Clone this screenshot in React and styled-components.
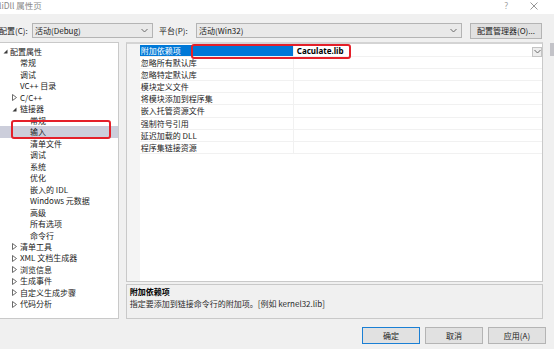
import styled, { createGlobalStyle } from "styled-components";

const GlobalStyle = createGlobalStyle`
    html, body { margin: 0; padding: 0; }
    body {
        background: #f0f0f0;
        font-family: "Noto Sans CJK SC", "Noto Sans", sans-serif;
        color: #1b1b1b;
        overflow: hidden;
    }
`

const Dialog = styled.div`
    position: relative;
    width: 554px;
    height: 349px;
    overflow: hidden;
    background: #f0f0f0;
    display: flex;
    flex-direction: column;
    font-size: 8px;
`

const TitleBar = styled.div`
    height: 14px;
    background: #ffffff;
    display: flex;
    align-items: flex-start;
    justify-content: space-between;
    color: #8a8a8a;
    font-size: 8.5px;
    line-height: 11px;
`

const TitleText = styled.span`
    margin-left: -1px;
`

const TitleIcons = styled.div`
    display: flex;
    align-items: center;
    gap: 22px;
    height: 11px;
    margin-right: 16px;
    color: #9a9a9a;
    font-family: "Noto Sans", "Liberation Sans", sans-serif;
    font-size: 8px;
    line-height: 11px;
`

const ConfigRow = styled.div`
    display: flex;
    align-items: center;
    height: 15px;
    margin: 9px 0 4px;
`

const Label = styled.span`
    width: ${p => p.w}px;
    margin-left: ${p => p.ml || 0}px;
    white-space: nowrap;
`

const Combo = styled.div`
    box-sizing: border-box;
    width: ${p => p.w}px;
    height: 15px;
    border: 1px solid #b4b4b4;
    background: #e9e9e9;
    display: flex;
    align-items: center;
    justify-content: space-between;
    padding: 0 4px 0 2px;
    margin-right: ${p => p.mr || 0}px;
`

const Button = styled.div`
    box-sizing: border-box;
    width: ${p => p.w}px;
    height: ${p => p.h || 17}px;
    border: 1px solid ${p => (p.primary ? "#1a7fd4" : "#b4b4b4")};
    background: #e1e1e1;
    display: flex;
    align-items: center;
    justify-content: center;
    color: #1b1b1b;
`

const Main = styled.div`
    display: flex;
    height: 277px;
`

const Tree = styled.div`
    position: relative;
    box-sizing: border-box;
    width: 119px;
    height: 277px;
    background: #ffffff;
    border: 1px solid #c9c9c9;
    border-left: none;
    padding-top: 3px;
    margin-right: 7px;
`

const TreeRow = styled.div`
    height: 11.47px;
    line-height: 11.47px;
    display: flex;
    align-items: center;
    padding-left: ${p => p.indent}px;
    background: ${p => (p.selected ? "#cccedb" : "transparent")};
    white-space: nowrap;
`

const Toggle = styled.span`
    width: ${p => p.w}px;
    display: inline-flex;
    align-items: center;
`

const RightCol = styled.div`
    width: 418px;
    display: flex;
    flex-direction: column;
    gap: 2px;
`

const Grid = styled.div`
    position: relative;
    box-sizing: border-box;
    flex: 1;
    background: #ffffff;
    border: 1px solid #c9c9c9;
    border-top: 2px solid #d4d4d4;
    display: flex;
`

const Gutter = styled.div`
    width: 13px;
    background: #f4f4f4;
`

const GridBody = styled.div`
    flex: 1;
    padding-top: 1px;
`

const GridRow = styled.div`
    display: flex;
    height: 12.1px;
    line-height: 12px;
    box-sizing: border-box;
    border-bottom: 1px solid #f1f1f1;
`

const NameCell = styled.div`
    width: 154px;
    padding-left: 1px;
    box-sizing: border-box;
    background: ${p => (p.active ? "#0078d7" : "transparent")};
    color: ${p => (p.active ? "#ffffff" : "#1b1b1b")};
    white-space: nowrap;
    border-right: 1px solid #f1f1f1;
`

const ValueCell = styled.div`
    flex: 1;
    display: flex;
    align-items: center;
    justify-content: space-between;
    padding-left: 3px;
    font-weight: 700;
    font-family: "Noto Sans", "Liberation Sans", sans-serif;
    color: #000;
`

const DropBtn = styled.div`
    box-sizing: border-box;
    width: 10px;
    height: 10px;
    margin-top: 2px;
    border: 1px solid #c4c4c4;
    background: #eeeeee;
    display: flex;
    align-items: center;
    justify-content: center;
`

const ScrollStrip = styled.div`
    width: 11px;
    display: flex;
    justify-content: flex-end;
    align-items: flex-start;
`

const Thumb = styled.div`
    width: 4px;
    height: 13px;
    margin-top: 1px;
    background: #c3c3c8;
`

const Description = styled.div`
    box-sizing: border-box;
    height: 35px;
    border: 1px solid #c9c9c9;
    background: #f0f0f0;
    padding: 1px 3px;
    line-height: 12px;
`

const DescTitle = styled.div`
    font-weight: 700;
    color: #000;
`

const DescText = styled.div`
    color: #2b2b2b;
`

const ButtonRow = styled.div`
    display: flex;
    justify-content: flex-end;
    gap: 5px;
    margin-top: 8px;
    padding-right: 8px;
`

const Marker = styled.div`
    position: absolute;
    top: ${p => p.top}px;
    left: ${p => p.left}px;
    width: ${p => p.w}px;
    height: ${p => p.h}px;
    box-sizing: border-box;
    border: 2px solid #e4202a;
    border-radius: 3px;
    pointer-events: none;
`

const Chevron = () => (
    <svg width="7" height="5" viewBox="0 0 7 5">
        <polyline points="0.5,1 3.5,4 6.5,1" fill="none" stroke="#6a6a6a" strokeWidth="1" />
    </svg>
)

const CloseIcon = () => (
    <svg width="8" height="8" viewBox="0 0 8 8">
        <path d="M0.5 0.5 L7.5 7.5 M7.5 0.5 L0.5 7.5" stroke="#8a8a8a" strokeWidth="0.9" />
    </svg>
)

const Expanded = () => (
    <svg width="5" height="5" viewBox="0 0 5 5">
        <polygon points="4.5,0.5 4.5,4.5 0.5,4.5" fill="#3a3a3a" />
    </svg>
)

const Collapsed = () => (
    <svg width="5" height="7" viewBox="0 0 5 7">
        <polygon points="0.5,0.5 4.5,3.5 0.5,6.5" fill="none" stroke="#5a5a5a" strokeWidth="0.9" />
    </svg>
)

const treeItems = [
    { text: "配置属性", level: 0, state: "open" },
    { text: "常规", level: 1 },
    { text: "调试", level: 1 },
    { text: "VC++ 目录", level: 1 },
    { text: "C/C++", level: 1, state: "closed" },
    { text: "链接器", level: 1, state: "open" },
    { text: "常规", level: 2 },
    { text: "输入", level: 2, selected: true },
    { text: "清单文件", level: 2 },
    { text: "调试", level: 2 },
    { text: "系统", level: 2 },
    { text: "优化", level: 2 },
    { text: "嵌入的 IDL", level: 2 },
    { text: "Windows 元数据", level: 2 },
    { text: "高级", level: 2 },
    { text: "所有选项", level: 2 },
    { text: "命令行", level: 2 },
    { text: "清单工具", level: 1, state: "closed" },
    { text: "XML 文档生成器", level: 1, state: "closed" },
    { text: "浏览信息", level: 1, state: "closed" },
    { text: "生成事件", level: 1, state: "closed" },
    { text: "自定义生成步骤", level: 1, state: "closed" },
    { text: "代码分析", level: 1, state: "closed" },
]

const gridItems = [
    "附加依赖项",
    "忽略所有默认库",
    "忽略特定默认库",
    "模块定义文件",
    "将模块添加到程序集",
    "嵌入托管资源文件",
    "强制符号引用",
    "延迟加载的 DLL",
    "程序集链接资源",
]

function TreeItem({ item }) {
    const indent = item.level === 0 ? 3 : item.level === 1 ? 12 : 30;
    return (
        <TreeRow indent={indent} selected={item.selected}>
            {item.level < 2 && (
                <Toggle w={item.level === 0 ? 7 : 8}>
                    {item.state === "open" && <Expanded />}
                    {item.state === "closed" && <Collapsed />}
                </Toggle>
            )}
            {item.text}
        </TreeRow>
    )
}

function App() {
    return (
        <>
            <GlobalStyle />
            <Dialog>
                <TitleBar>
                    <TitleText>liDll 属性页</TitleText>
                    <TitleIcons>
                        <span>?</span>
                        <CloseIcon />
                    </TitleIcons>
                </TitleBar>

                <ConfigRow>
                    <Label w={33} ml={-1}>配置(C):</Label>
                    <Combo w={121} mr={6}>
                        <span>活动(Debug)</span>
                        <Chevron />
                    </Combo>
                    <Label w={37}>平台(P):</Label>
                    <Combo w={266} mr={8}>
                        <span>活动(Win32)</span>
                        <Chevron />
                    </Combo>
                    <Button w={72} h={16}>配置管理器(O)...</Button>
                </ConfigRow>

                <Main>
                    <Tree>
                        {treeItems.map((item, i) => (
                            <TreeItem key={i} item={item} />
                        ))}
                        <Marker top={77} left={11} w={100} h={19} />
                    </Tree>

                    <RightCol>
                        <Grid>
                            <Gutter />
                            <GridBody>
                                {gridItems.map((name, i) => (
                                    <GridRow key={i}>
                                        <NameCell active={i === 0}>{name}</NameCell>
                                        <ValueCell>
                                            {i === 0 && (
                                                <>
                                                    <span>Caculate.lib</span>
                                                    <DropBtn><Chevron /></DropBtn>
                                                </>
                                            )}
                                        </ValueCell>
                                    </GridRow>
                                ))}
                            </GridBody>
                            <Marker top={0} left={64} w={160} h={15} />
                        </Grid>
                        <Description>
                            <DescTitle>附加依赖项</DescTitle>
                            <DescText>指定要添加到链接命令行的附加项。[例如 kernel32.lib]</DescText>
                        </Description>
                    </RightCol>

                    <ScrollStrip>
                        <Thumb />
                    </ScrollStrip>
                </Main>

                <ButtonRow>
                    <Button w={58} primary>确定</Button>
                    <Button w={58}>取消</Button>
                    <Button w={58}>应用(A)</Button>
                </ButtonRow>
            </Dialog>
        </>
    )
}

export default App;
